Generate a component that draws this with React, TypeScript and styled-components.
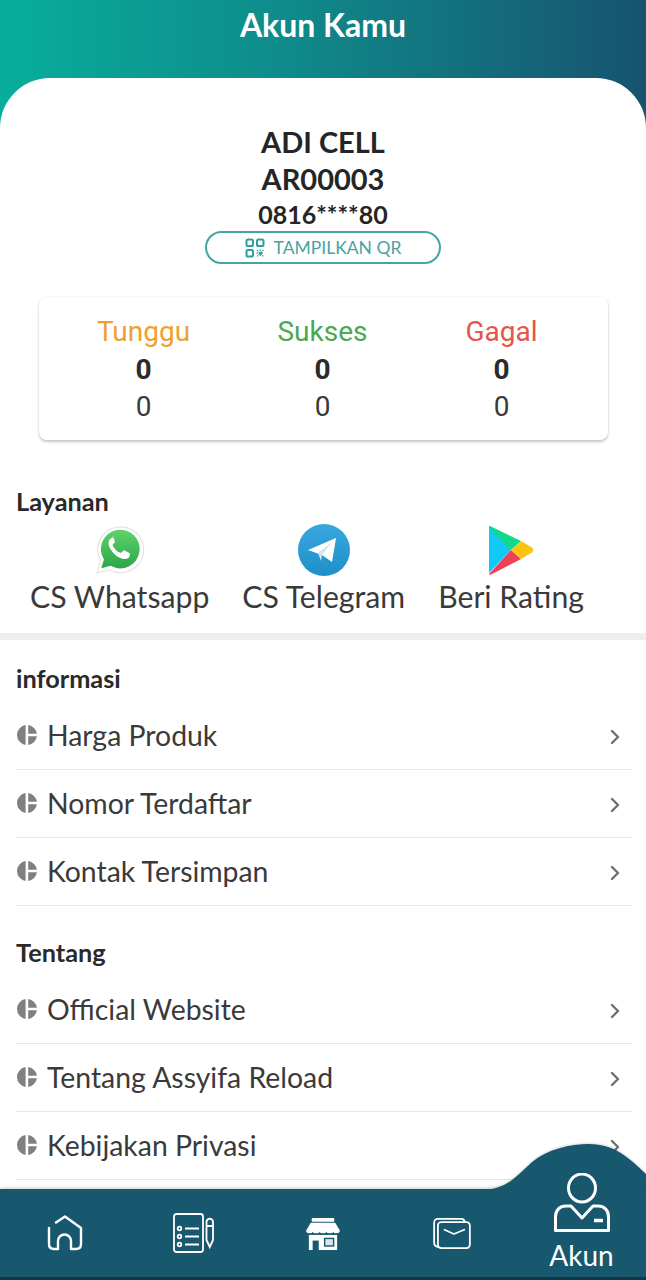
import React from "react";
import styled, { createGlobalStyle } from "styled-components";

const GlobalStyle = createGlobalStyle`
  html, body { margin: 0; padding: 0; background: #fff; }
  * { box-sizing: border-box; }
`;

const FONT = `"Lato", "Noto Sans", sans-serif`;
const NAV_BG = "#18586f";

const Page = styled.div`
  position: relative;
  width: 646px;
  height: 1280px;
  overflow: hidden;
  background: #fff;
  font-family: ${FONT};
  color: #262626;
`;

const Header = styled.header`
  height: 130px;
  padding-top: 6px;
  background: linear-gradient(90deg, #08ae9b 0%, #0f8a8a 45%, #17536f 100%);
  color: #fff;
  font-size: 32px;
  font-weight: 700;
  line-height: 38px;
  text-align: center;
`;

const Sheet = styled.main`
  margin-top: -52px;
  border-radius: 50px 50px 0 0;
  background: #fff;
  padding-top: 45px;
`;

const Profile = styled.section`
  display: flex;
  flex-direction: column;
  align-items: center;
`;

const ProfileLine = styled.div<{ $size: number; $height: number }>`
  font-size: ${(p) => p.$size}px;
  line-height: ${(p) => p.$height}px;
  font-weight: 700;
  color: #252525;
`;

const QrButton = styled.button`
  display: flex;
  align-items: center;
  justify-content: center;
  gap: 9px;
  width: 236px;
  height: 33px;
  padding: 0;
  border: 2px solid #43a6a0;
  border-radius: 17px;
  background: #fff;
  color: #4aa3a3;
  font-family: ${FONT};
  font-size: 17.5px;
`;

const StatsCard = styled.section`
  display: grid;
  grid-template-columns: repeat(3, 179px);
  width: 569px;
  height: 143px;
  margin: 33px 0 0 39px;
  padding: 16px 14px 0 15px;
  border-radius: 8px;
  background: #fff;
  box-shadow: 0 2px 3px rgba(0, 0, 0, 0.22), 0 0 2px rgba(0, 0, 0, 0.07);
  font-family: Roboto, sans-serif;
  font-size: 28px;
  line-height: 37.5px;
  text-align: center;
`;

const StatColumn = styled.div``;

const StatTitle = styled.div<{ $color: string }>`
  color: ${(p) => p.$color};
`;

const StatCount = styled.div`
  font-weight: 700;
  color: #2b2b2b;
`;

const StatAmount = styled.div`
  color: #3a3a3a;
`;

const SectionTitle = styled.h2<{ $top: number }>`
  margin: ${(p) => p.$top}px 0 0 16px;
  font-size: 25.3px;
  line-height: 30px;
  font-weight: 700;
  color: #2a2a2a;
`;

const Services = styled.div`
  display: flex;
  gap: 33px;
  padding-left: 30px;
  margin-top: 6px;
`;

const Service = styled.div`
  display: flex;
  flex-direction: column;
  align-items: center;
`;

const ServiceIcon = styled.div`
  height: 55px;
  display: flex;
  align-items: center;
  justify-content: center;
`;

const ServiceLabel = styled.div`
  font-size: 30.2px;
  line-height: 38px;
  color: #3a3a3a;
`;

const Divider = styled.div`
  height: 7px;
  margin-top: 18px;
  background: #eeeeee;
`;

const MenuList = styled.ul`
  list-style: none;
  margin: 9px 0 0 16px;
  padding: 0;
  width: 616px;
`;

const MenuItem = styled.li`
  display: flex;
  align-items: center;
  height: 68px;
  padding-bottom: 1px;
  border-bottom: 1px solid #e8e8e8;
  font-size: 28.4px;
  color: #3a3a3a;
`;

const MenuText = styled.span`
  flex: 1;
  margin-left: 9px;
`;

const ChevronSlot = styled.span`
  display: flex;
  margin-top: 3px;
`;

const BottomNav = styled.nav`
  position: absolute;
  left: 0;
  right: 0;
  bottom: 0;
  height: 91px;
  display: grid;
  grid-template-columns: repeat(5, 129.2px);
  align-items: center;
  justify-items: center;
  background: ${NAV_BG};
  border-bottom: 3px solid #10374a;
  box-shadow: 0 -1px 3px rgba(0, 0, 0, 0.2);
`;

const Hump = styled.svg`
  position: absolute;
  right: 0;
  bottom: 90px;
  filter: drop-shadow(0 -1px 1px rgba(0, 0, 0, 0.15));
`;

const ActiveTab = styled.div`
  position: absolute;
  right: 0;
  bottom: 8px;
  width: 129px;
  display: flex;
  flex-direction: column;
  align-items: center;
  gap: 5px;
  color: #fff;
  font-size: 28px;
  line-height: 34px;
`;

const MenuDot = () => (
  <svg width="22" height="22" viewBox="0 0 22 22" fill="#808080">
    <path d="M9.6 1.1A10 10 0 0 0 9.6 20.9Z" />
    <path d="M12.2 1.1A10 10 0 0 1 20.9 9.8h-8.7ZM12.2 20.9A10 10 0 0 0 20.9 12.2h-8.7Z" />
  </svg>
);

const Chevron = () => (
  <svg width="32" height="32" viewBox="0 0 32 32" fill="none" stroke="#6f6f6f" strokeWidth="2.4" strokeLinecap="round" strokeLinejoin="round">
    <path d="M12 10l6 6-6 6" />
  </svg>
);

const QrIcon = () => (
  <svg width="20" height="20" viewBox="0 0 20 20" fill="none" stroke="#2f9f9c" strokeWidth="2">
    <rect x="1.5" y="1.5" width="6.5" height="6.5" rx="1.6" />
    <rect x="12" y="1.5" width="6.5" height="6.5" rx="1.6" />
    <rect x="1.5" y="12" width="6.5" height="6.5" rx="1.6" />
    <path d="M12 12l6.5 6.5M18.5 12L12 18.5M15.2 11.5v7.5M11.5 15.2h7.5" strokeWidth="1.2" strokeDasharray="1.5 1" />
  </svg>
);

const WhatsappIcon = () => (
  <svg width="50" height="50" viewBox="0 0 48 48">
    <defs>
      <linearGradient id="wa" x1="0" y1="0" x2="0" y2="1">
        <stop offset="0" stopColor="#60d26c" />
        <stop offset="1" stopColor="#2ba748" />
      </linearGradient>
    </defs>
    <path d="M2 46l3.3-11.8A22 22 0 1 1 14 43z" fill="#fff" stroke="#e4e4e4" strokeWidth="1.2" />
    <path d="M6 41.5l2.6-8.4A18.6 18.6 0 1 1 15 39.2z" fill="url(#wa)" />
    <path d="M17.2 12.5c-1-.1-2 .2-2.9 1.4-1.6 2-1.8 5 .4 8.8 2.6 4.6 6 7.6 10.8 9.4 3 1.1 5.8.6 7.3-1.5.7-1 1-2 .8-3-.1-.6-4.5-3-5.5-3.2-.8-.2-1.2.3-1.7 1-.5.7-1 1.3-1.6 1.3-1 0-3.5-1.5-5-3-1.5-1.5-3-3.8-2.8-4.7.1-.6.8-1.1 1.4-1.7.6-.6.8-1 .6-1.7-.4-1.3-1.4-3.9-2.1-4.7-.2-.2-.4-.4-.5-.4z" fill="#fff" />
  </svg>
);

const TelegramIcon = () => (
  <svg width="52" height="52" viewBox="0 0 52 52">
    <defs>
      <linearGradient id="tg" x1="0" y1="0" x2="0" y2="1">
        <stop offset="0" stopColor="#38a7dd" />
        <stop offset="1" stopColor="#1f8fca" />
      </linearGradient>
    </defs>
    <circle cx="26" cy="26" r="26" fill="url(#tg)" />
    <path d="M10 26L38 14 34 38 24 31z" fill="#fff" />
    <path d="M20 29l15-12-11 14-1 6z" fill="#d4e4f2" />
  </svg>
);

const PlayIcon = () => (
  <svg width="46" height="50" viewBox="0 0 46 50">
    <path d="M1 2C1 1 1.5.5 2 1l31 15-10 9L1 25z" fill="#12d88a" />
    <path d="M1 2v46L23 25z" fill="#12c8f4" />
    <path d="M1 49l22-24 10 9L3 49.5c-1 .5-2 0-2-.5z" fill="#ef4058" />
    <path d="M33 16l11 6.5c1.5 1 1.5 4 0 5L33 34 23 25z" fill="#fcc412" />
  </svg>
);

const HomeIcon = () => (
  <svg width="36" height="36" viewBox="0 0 36 36" fill="none" stroke="#fff" strokeWidth="2.4" strokeLinecap="round" strokeLinejoin="round">
    <path d="M2 13v16c0 3 2 5 5 5h4v-8a6.5 6.5 0 0 1 13 0v8h5c3 0 5-2 5-5V13L18 1.5 9 7.5" />
  </svg>
);

const OrderIcon = () => (
  <svg width="42" height="40" viewBox="0 0 42 40" fill="none" stroke="#fff" strokeWidth="1.8">
    <rect x="1" y="1" width="29" height="38" rx="2.5" />
    <circle cx="6.5" cy="15.5" r="1.8" />
    <circle cx="6.5" cy="23.5" r="1.8" />
    <circle cx="6.5" cy="31.5" r="1.8" />
    <path d="M12 15.500h14M12 23.500h14M12 31.500h14" strokeWidth="2" />
    <path d="M33.5 9a3.25 3.25 0 0 1 6.500 0v18l-3.250 7-3.250-7zM33.500 13h6.500" />
  </svg>
);

const StoreIcon = () => (
  <svg width="36" height="33" viewBox="0 0 38 35">
    <rect x="7" y="1" width="24" height="4" rx="1" fill="#fff" />
    <path d="M6 6h26l5 8.500a3 3 0 0 1-3.600 2.500 3 3 0 0 1-3.600-1 3 3 0 0 1-3.600 1 3 3 0 0 1-3.600-1 3 3 0 0 1-3.600 1 3 3 0 0 1-3.600-1 3 3 0 0 1-3.600 1 3 3 0 0 1-3.600-1 3 3 0 0 1-3.600 1A3 3 0 0 1 1 14.500z" fill="#fff" />
    <path d="M4 19h30v16H4z" fill="#fff" />
    <rect x="8" y="25" width="6.5" height="10" fill={NAV_BG} />
    <rect x="20" y="22" width="11" height="9.5" fill={NAV_BG} />
    <rect x="21.5" y="23.5" width="8" height="6.5" fill="#fff" fillOpacity=".85" />
  </svg>
);

const WalletIcon = () => (
  <svg width="38" height="31" viewBox="0 0 40 33" fill="none" stroke="#fff" strokeWidth="1.9" strokeLinecap="round" strokeLinejoin="round">
    <path d="M5.500 31C3 30.500 1 29 1 26V5c0-2.500 1.500-4 4-4h25c2 0 3 1 3.500 3" />
    <rect x="5" y="4.5" width="34" height="27.5" rx="3.5" />
    <path d="M12 12.500l10 4.500 11-4.500" />
  </svg>
);

const PersonIcon = () => (
  <svg width="56" height="60" viewBox="0 0 56 60" fill="none" stroke="#fff" strokeWidth="3" strokeLinejoin="round">
    <ellipse cx="28" cy="15" rx="13.5" ry="14" />
    <path d="M1.500 57.500V44C1.500 37 6 33 12 33h5l11 12 11-12h5c6 0 10.500 4 10.500 11v13.500z" />
    <path d="M40 47.500h9" strokeWidth="3.5" />
  </svg>
);

const stats = [
  { title: "Tunggu", color: "#ee9f2f" },
  { title: "Sukses", color: "#4aa84f" },
  { title: "Gagal", color: "#e2564b" },
];

const services = [
  { label: "CS Whatsapp", icon: <WhatsappIcon /> },
  { label: "CS Telegram", icon: <TelegramIcon /> },
  { label: "Beri Rating", icon: <PlayIcon /> },
];

const informasi = ["Harga Produk", "Nomor Terdaftar", "Kontak Tersimpan"];
const tentang = ["Official Website", "Tentang Assyifa Reload", "Kebijakan Privasi"];

const Menu = ({ items }: { items: string[] }) => (
  <MenuList>
    {items.map((item) => (
      <MenuItem key={item}>
        <MenuDot />
        <MenuText>{item}</MenuText>
        <ChevronSlot>
          <Chevron />
        </ChevronSlot>
      </MenuItem>
    ))}
  </MenuList>
);

export default function App() {
  return (
    <Page>
      <GlobalStyle />
      <Header>Akun Kamu</Header>
      <Sheet>
        <Profile>
          <ProfileLine $size={29} $height={37}>ADI CELL</ProfileLine>
          <ProfileLine $size={29} $height={38}>AR00003</ProfileLine>
          <ProfileLine $size={25} $height={33}>0816****80</ProfileLine>
          <QrButton>
            <QrIcon />
            TAMPILKAN QR
          </QrButton>
        </Profile>
        <StatsCard>
          {stats.map((s) => (
            <StatColumn key={s.title}>
              <StatTitle $color={s.color}>{s.title}</StatTitle>
              <StatCount>0</StatCount>
              <StatAmount>0</StatAmount>
            </StatColumn>
          ))}
        </StatsCard>
        <SectionTitle $top={46}>Layanan</SectionTitle>
        <Services>
          {services.map((s) => (
            <Service key={s.label}>
              <ServiceIcon>{s.icon}</ServiceIcon>
              <ServiceLabel>{s.label}</ServiceLabel>
            </Service>
          ))}
        </Services>
        <Divider />
        <SectionTitle $top={23}>informasi</SectionTitle>
        <Menu items={informasi} />
        <SectionTitle $top={31}>Tentang</SectionTitle>
        <Menu items={tentang} />
      </Sheet>
      <BottomNav>
        <HomeIcon />
        <OrderIcon />
        <StoreIcon />
        <WalletIcon />
      </BottomNav>
      <Hump width="164" height="46" viewBox="0 0 164 46">
        <path d="M0 46C24 45 33 34 50 18 66 5 88 0 107 0c26 0 40 14 57 30v16z" fill={NAV_BG} />
      </Hump>
      <ActiveTab>
        <PersonIcon />
        Akun
      </ActiveTab>
    </Page>
  );
}
